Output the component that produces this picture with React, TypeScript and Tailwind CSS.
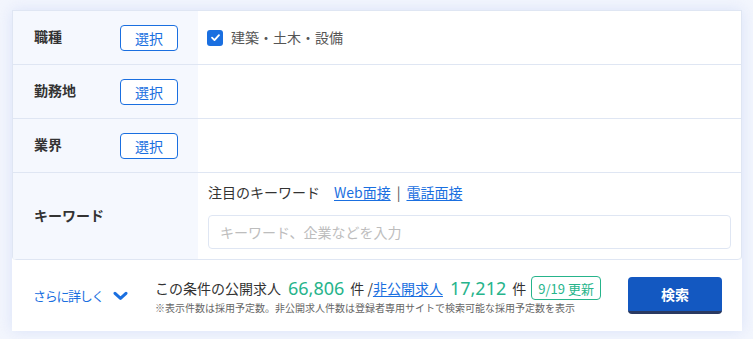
import React from "react";

const font = { fontFamily: '"Noto Sans CJK JP", "Noto Sans", sans-serif' };
const numFont = { fontFamily: '"Noto Sans", "Noto Sans CJK JP", sans-serif' };

function SelectButton() {
  return (
    <button className="w-[58px] h-[26px] border border-[#1a6fe0] rounded-[4px] bg-white text-[14px] text-[#1a6fe0] leading-none flex items-center justify-center">
      選択
    </button>
  );
}

function Row({ label, children }: { label: string; children?: React.ReactNode }) {
  return (
    <div className="flex h-[54px] border-b border-[#dfe6f3]">
      <div className="w-[185px] shrink-0 bg-[#f5f8fe] flex items-center pl-[21px] pr-[20px] justify-between">
        <span className="text-[14px] font-bold text-[#333] -mt-[2px]">{label}</span>
        <SelectButton />
      </div>
      <div className="flex-1 flex items-center pl-[10px]">{children}</div>
    </div>
  );
}

export default function App() {
  return (
    <div className="w-[753px] h-[339px] bg-[#f3f6fd] pt-[10px] pl-[12px]" style={font}>
      <div className="w-[730px] bg-white shadow-[0_0_14px_rgba(196,210,245,0.55)]">
        <div className="border border-[#dfe6f3] border-b-0 rounded-b-[4px] overflow-hidden">
          <Row label="職種">
            <div className="flex items-center gap-[8px]">
              <span className="w-[16px] h-[16px] rounded-[3px] bg-[#1a6fe0] flex items-center justify-center -ml-[1px]">
                <svg width="11" height="11" viewBox="0 0 12 12" fill="none">
                  <path d="M2.2 6.2 L4.9 8.8 L9.8 3.4" stroke="white" strokeWidth="2" strokeLinecap="round" strokeLinejoin="round" />
                </svg>
              </span>
              <span className="text-[14px] text-[#555] -mt-[1px]">建築・土木・設備</span>
            </div>
          </Row>
          <Row label="勤務地" />
          <Row label="業界" />
          <div className="flex h-[87px] border-b border-[#dfe6f3] rounded-b-[4px]">
            <div className="w-[185px] shrink-0 bg-[#f5f8fe] flex items-center pl-[21px]">
              <span className="text-[14px] font-bold text-[#333] -mt-[2px]">キーワード</span>
            </div>
            <div className="flex-1 flex flex-col pl-[10px] pr-[10px] pt-[9px]">
              <div className="text-[14px] text-[#333] leading-[20px] flex items-center">
                <span>注目のキーワード</span>
                <span className="ml-[14px] text-[#1a6fe0] underline underline-offset-2">Web面接</span>
                <span className="mx-[6px] text-[#555]">|</span>
                <span className="text-[#1a6fe0] underline underline-offset-2">電話面接</span>
              </div>
              <div className="mt-[13px] h-[34px] border border-[#dfe6f3] rounded-[4px] flex items-center pl-[11px] text-[14px] text-[#bdbdbd]">
                キーワード、企業などを入力
              </div>
            </div>
          </div>
        </div>
        <div className="h-[71px] flex items-center">
          <div className="w-[143px] shrink-0 pl-[21px] flex items-center gap-[10px]">
            <span className="text-[13px] text-[#1a6fe0] tracking-[-1.3px]">さらに詳しく</span>
            <svg width="15" height="10" viewBox="0 0 15 10" fill="none">
              <path d="M2 2.3 L7.5 7.4 L13 2.3" stroke="#1a6fe0" strokeWidth="3" strokeLinecap="round" strokeLinejoin="round" />
            </svg>
          </div>
          <div className="flex flex-col">
            <div className="flex items-center text-[14px] text-[#333] leading-[24px]">
              <span>この条件の公開求人</span>
              <span className="ml-[7px] text-[18px] text-[#26b48b]" style={numFont}>66,806</span>
              <span className="ml-[6px]">件 /</span>
              <span className="text-[#1a6fe0] underline underline-offset-2">非公開求人</span>
              <span className="ml-[7px] text-[18px] text-[#26b48b]" style={numFont}>17,212</span>
              <span className="ml-[6px]">件</span>
              <span className="ml-[5px] h-[24px] px-[6px] border border-[#26b48b] rounded-[4px] text-[13px] text-[#26b48b] flex items-center leading-none">
                9/19 更新
              </span>
            </div>
            <div className="text-[10px] text-[#666] leading-[14px] mt-[1px]">
              ※表示件数は採用予定数。非公開求人件数は登録者専用サイトで検索可能な採用予定数を表示
            </div>
          </div>
          <button className="ml-auto mr-[20px] w-[94px] h-[37px] rounded-[4px] bg-[#1358c1] border-b-[3px] border-[#2a3a62] text-white text-[14px] font-bold flex items-center justify-center">
            検索
          </button>
        </div>
      </div>
    </div>
  );
}
